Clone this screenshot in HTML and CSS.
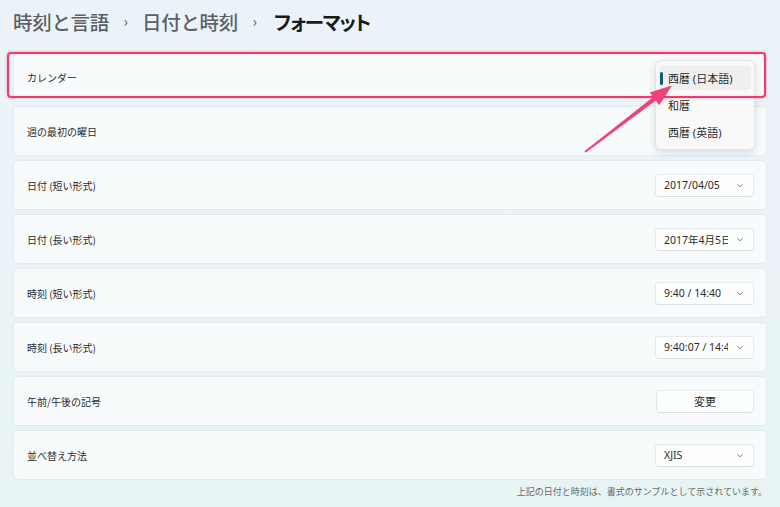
FILE: index.html
```html
<!DOCTYPE html>
<html lang="ja">
<head>
<meta charset="utf-8">
<link rel="stylesheet" href="styles.css">
</head>
<body>
<div class="page">
  <header class="crumbs">
    <span class="crumb">時刻と言語</span>
    <span class="sep">›</span>
    <span class="crumb">日付と時刻</span>
    <span class="sep">›</span>
    <span class="crumb current">フォーマット</span>
  </header>

  <div class="list">
    <div class="card first">
      <span class="label">カレンダー</span>
      <div class="popup">
        <div class="opt selected"><span class="bar"></span>西暦 (日本語)</div>
        <div class="opt">和暦</div>
        <div class="opt">西暦 (英語)</div>
      </div>
    </div>
    <div class="card">
      <span class="label">週の最初の曜日</span>
    </div>
    <div class="card">
      <span class="label">日付 (短い形式)</span>
      <div class="select"><span class="val">2017/04/05</span><svg class="chev" viewBox="0 0 10 6"><path d="M1.5 1.2 5 4.6 8.5 1.2"/></svg></div>
    </div>
    <div class="card">
      <span class="label">日付 (長い形式)</span>
      <div class="select"><span class="val">2017年4月5日</span><svg class="chev" viewBox="0 0 10 6"><path d="M1.5 1.2 5 4.6 8.5 1.2"/></svg></div>
    </div>
    <div class="card">
      <span class="label">時刻 (短い形式)</span>
      <div class="select"><span class="val">9:40 / 14:40</span><svg class="chev" viewBox="0 0 10 6"><path d="M1.5 1.2 5 4.6 8.5 1.2"/></svg></div>
    </div>
    <div class="card">
      <span class="label">時刻 (長い形式)</span>
      <div class="select"><span class="val">9:40:07 / 14:4</span><svg class="chev" viewBox="0 0 10 6"><path d="M1.5 1.2 5 4.6 8.5 1.2"/></svg></div>
    </div>
    <div class="card">
      <span class="label">午前/午後の記号</span>
      <button class="btn">変更</button>
    </div>
    <div class="card">
      <span class="label">並べ替え方法</span>
      <div class="select"><span class="val">XJIS</span><svg class="chev" viewBox="0 0 10 6"><path d="M1.5 1.2 5 4.6 8.5 1.2"/></svg></div>
    </div>
  </div>

  <p class="note">上記の日付と時刻は、書式のサンプルとして示されています。</p>

  <div class="highlight"></div>
  <svg class="arrow" viewBox="0 0 780 507" width="780" height="507">
    <polygon points="584.4,151.3 653.2,97.1 649.7,92.4 672,85.5 659.3,105.2 655.8,100.6 585.6,152.7"/>
  </svg>
</div>
</body>
</html>
```
FILE: styles.css
```css
* { box-sizing: border-box; }
html, body { margin: 0; padding: 0; }
body {
  width: 780px;
  height: 507px;
  overflow: hidden;
  font-family: "Noto Sans", "Noto Sans CJK JP", sans-serif;
  background: linear-gradient(180deg, #ebf3f8 0%, #eaf4f7 60%, #e8f4f4 100%);
  color: #1b1b1b;
}
.page {
  position: relative;
  width: 780px;
  height: 507px;
  padding: 0 13px;
}
.crumbs {
  height: 42px;
  margin-bottom: 10px;
  display: flex;
  align-items: center;
  font-family: "Noto Sans CJK JP", sans-serif;
  font-size: 19.5px;
  font-weight: 500;
  letter-spacing: -0.3px;
}
.crumb { color: #5d6064; }
.crumb.current {
  color: #1a1a1a;
  font-weight: 700;
  font-feature-settings: "palt";
  letter-spacing: -1.2px;
  margin-left: 3px;
}
.sep {
  color: #5d6064;
  font-size: 15px;
  font-weight: 400;
  width: 33px;
  text-align: center;
  margin-top: -2px;
}
.list {
  display: flex;
  flex-direction: column;
  gap: 4px;
}
.card {
  position: relative;
  height: 50px;
  display: flex;
  align-items: center;
  justify-content: space-between;
  padding: 0 12px 0 13px;
  background: #f7fbfc;
  border: 1px solid #e4ecef;
  border-radius: 4px;
}
.label {
  font-family: "Noto Sans CJK JP", sans-serif;
  font-size: 10px;
  color: #2a2a2a;
}
.select {
  width: 99px;
  height: 23px;
  display: flex;
  align-items: center;
  padding: 0 0 0 8px;
  background: #fdfefe;
  border: 1px solid #e6e9eb;
  border-bottom-color: #dcdfe1;
  border-radius: 4px;
  font-family: "Noto Sans", "Noto Sans CJK JP", sans-serif;
  font-size: 10.5px;
  color: #2b2b2b;
}
.val {
  width: 64px;
  flex: none;
  white-space: nowrap;
  overflow: hidden;
}
.chev {
  width: 8px;
  height: 5px;
  flex: none;
  margin-left: 8px;
}
.chev path { fill: none; stroke: #666; stroke-width: 1; }
.btn {
  width: 98px;
  height: 23px;
  background: #fdfefe;
  border: 1px solid #e6e9eb;
  border-bottom-color: #dcdfe1;
  border-radius: 4px;
  font-family: "Noto Sans CJK JP", sans-serif;
  font-size: 11px;
  color: #2b2b2b;
  padding: 0;
}
.popup {
  position: absolute;
  top: 7px;
  right: 11px;
  width: 100px;
  height: 90px;
  padding: 5px 3px;
  background: #f9f9f9;
  border: 1px solid #e3e5e6;
  border-radius: 6px;
  box-shadow: 0 3px 9px rgba(0,0,0,0.12);
  display: flex;
  flex-direction: column;
  gap: 3px;
  z-index: 2;
}
.opt {
  position: relative;
  height: 25px;
  display: flex;
  align-items: center;
  padding-left: 9px;
  font-family: "Noto Sans", "Noto Sans CJK JP", sans-serif;
  font-size: 11px;
  color: #2b2b2b;
  border-radius: 4px;
  white-space: nowrap;
}
.opt.selected { background: #efefef; }
.bar {
  position: absolute;
  left: 1px;
  top: 6px;
  width: 2.5px;
  height: 13px;
  border-radius: 2px;
  background: #0f5e6d;
}
.note {
  margin: 5px 0 0;
  text-align: right;
  font-family: "Noto Sans CJK JP", sans-serif;
  font-size: 9px;
  line-height: 14px;
  color: #666a6d;
}
.highlight {
  position: absolute;
  left: 7px;
  top: 52px;
  width: 759px;
  height: 46px;
  border: 2.5px solid #ee3a6c;
  border-radius: 4px;
  box-shadow: 0 0 3px rgba(238,58,108,0.45), inset 0 0 2px rgba(238,58,108,0.3);
  z-index: 3;
}
.arrow {
  position: absolute;
  left: 0;
  top: 0;
  z-index: 4;
  pointer-events: none;
}
.arrow polygon { fill: #f0427a; }
```
